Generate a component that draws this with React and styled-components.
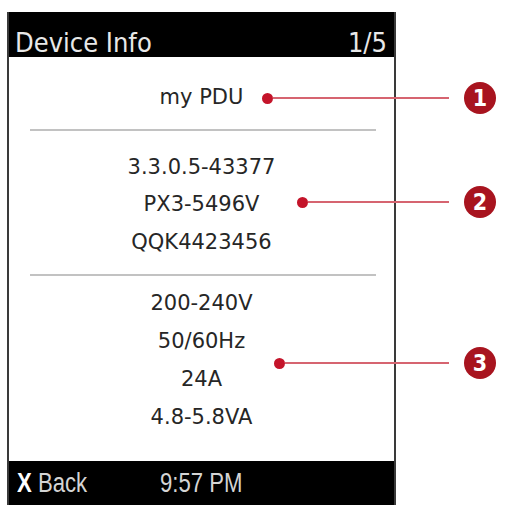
import styled, { createGlobalStyle } from "styled-components";

const GlobalStyle = createGlobalStyle`
  html, body {
    margin: 0;
    padding: 0;
    background: #ffffff;
  }
`;

const sections = [
  { lines: ["my PDU"], padTop: 22, lineHeight: 37.5 },
  { lines: ["3.3.0.5-43377", "PX3-5496V", "QQK4423456"], padTop: 17.5, lineHeight: 37.5 },
  { lines: ["200-240V", "50/60Hz", "24A", "4.8-5.8VA"], padTop: 8.5, lineHeight: 38 },
];

const callouts = [
  { number: 1, y: 98, dotX: 267 },
  { number: 2, y: 202, dotX: 302 },
  { number: 3, y: 363, dotX: 279 },
];

export default function App() {
  return (
    <>
      <GlobalStyle />
      <Page>
        <Screen>
          <Header>
            <Title>Device Info</Title>
            <Title>1/5</Title>
          </Header>
          <Body>
            {sections.map((section, i) => (
              <div key={i}>
                {i > 0 && <Divider />}
                <Section $padTop={section.padTop}>
                  {section.lines.map((line) => (
                    <Line key={line} $lineHeight={section.lineHeight}>
                      {line}
                    </Line>
                  ))}
                </Section>
              </div>
            ))}
          </Body>
          <Footer>
            <FooterSlot $width={143}>
              <NarrowText>
                <strong>X</strong> Back
              </NarrowText>
            </FooterSlot>
            <FooterSlot>
              <NarrowText>9:57 PM</NarrowText>
            </FooterSlot>
          </Footer>
        </Screen>
        {callouts.map((c) => (
          <Callout key={c.number} style={{ top: c.y - 16, left: c.dotX - 5 }}>
            <Dot />
            <Leader style={{ width: 448 - c.dotX - 5 }} />
            <Badge>{c.number}</Badge>
          </Callout>
        ))}
      </Page>
    </>
  );
}

const Page = styled.div`
  position: relative;
  width: 506px;
  height: 507px;
  padding: 12px 0 0 7px;
  box-sizing: border-box;
`;

const Screen = styled.div`
  display: flex;
  flex-direction: column;
  width: 389px;
  height: 493px;
  box-sizing: border-box;
  border-left: 2px solid #3a3a3a;
  border-right: 2px solid #3a3a3a;
  background: #ffffff;
`;

const Header = styled.div`
  display: flex;
  justify-content: space-between;
  align-items: flex-end;
  height: 45px;
  box-sizing: border-box;
  padding: 0 7px 1px 6px;
  background: #000000;
`;

const Title = styled.span`
  font-family: "DejaVu Sans Condensed", "DejaVu Sans", sans-serif;
  font-stretch: condensed;
  font-size: 27px;
  line-height: 27px;
  color: #e8e8e8;
`;

const Body = styled.div`
  flex: 1;
`;

const Section = styled.div`
  display: flex;
  flex-direction: column;
  align-items: center;
  padding-top: ${(p) => p.$padTop}px;
`;

const Line = styled.div`
  font-family: "DejaVu Sans", Verdana, sans-serif;
  font-size: 21px;
  line-height: ${(p) => p.$lineHeight}px;
  color: #262626;
`;

const Divider = styled.div`
  height: 2px;
  margin: 12.5px 18px 0 21px;
  background: #c2c2c2;
`;

const Footer = styled.div`
  display: flex;
  align-items: center;
  height: 44px;
  padding-left: 8px;
  background: #000000;
  font-family: "Liberation Sans", Arial, sans-serif;
  font-size: 27px;
  color: #d4d4d4;
`;

const FooterSlot = styled.div`
  width: ${(p) => (p.$width ? `${p.$width}px` : "auto")};
  white-space: nowrap;
`;

const NarrowText = styled.span`
  display: inline-block;
  transform: scaleX(0.82);
  transform-origin: left center;

  strong {
    color: #ffffff;
  }
`;

const Callout = styled.div`
  position: absolute;
  display: flex;
  align-items: center;
  height: 32px;
`;

const Dot = styled.div`
  width: 11px;
  height: 11px;
  border-radius: 50%;
  background: #c4142a;
  flex-shrink: 0;
`;

const Leader = styled.div`
  height: 2px;
  margin-right: 15px;
  background: #d66470;
  flex-shrink: 0;
`;

const Badge = styled.div`
  display: flex;
  align-items: center;
  justify-content: center;
  width: 32px;
  height: 32px;
  border-radius: 50%;
  background: #a8141f;
  color: #ffffff;
  font-family: "DejaVu Sans Condensed", "DejaVu Sans", sans-serif;
  font-weight: bold;
  font-size: 23px;
`;
